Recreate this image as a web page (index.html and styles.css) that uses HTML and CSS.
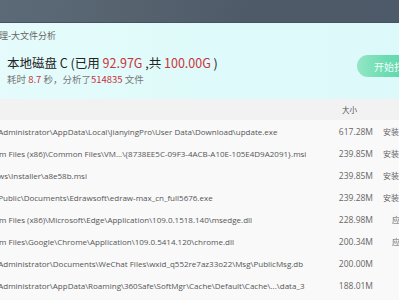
FILE: index.html
```html
<!DOCTYPE html>
<html lang="zh-CN">
<head>
<meta charset="utf-8">
<title>大文件分析</title>
<link rel="stylesheet" href="styles.css">
</head>
<body>
<div class="window">
  <div class="titlebar"></div>
  <div class="panel">
    <div class="crumb">磁盘清理-大文件分析</div>
    <div class="summary">
      <div class="drive-icon"></div>
      <div class="info">
        <div class="disk">本地磁盘 C (已用 <span class="red">92.97G</span> ,共 <span class="red">100.00G</span> )</div>
        <div class="stats">耗时 <span class="red">8.7</span> 秒，分析了<span class="red">514835</span> 文件</div>
      </div>
      <button class="scan">开始扫描</button>
    </div>
  </div>
  <div class="table">
    <div class="thead">
      <span class="c-path"></span>
      <span class="c-size">大小</span>
      <span class="c-type"></span>
    </div>
    <div class="row"><span class="c-path">C:\Users\Administrator\AppData\Local\JianyingPro\User Data\Download\update.exe</span><span class="c-size">617.28M</span><span class="c-type">安装包</span></div>
    <div class="row"><span class="c-path">C:\Program Files (x86)\Common Files\VM...\{8738EE5C-09F3-4ACB-A10E-105E4D9A2091}.msi</span><span class="c-size">239.85M</span><span class="c-type">安装包</span></div>
    <div class="row"><span class="c-path">C:\Windows\Installer\a8e58b.msi</span><span class="c-size">239.85M</span><span class="c-type">安装包</span></div>
    <div class="row"><span class="c-path">C:\Users\Public\Documents\Edrawsoft\edraw-max_cn_full5676.exe</span><span class="c-size">239.28M</span><span class="c-type">安装包</span></div>
    <div class="row"><span class="c-path">C:\Program Files (x86)\Microsoft\Edge\Application\109.0.1518.140\msedge.dll</span><span class="c-size">228.98M</span><span class="c-type indent">应用组件</span></div>
    <div class="row"><span class="c-path">C:\Program Files\Google\Chrome\Application\109.0.5414.120\chrome.dll</span><span class="c-size">200.34M</span><span class="c-type indent">应用组件</span></div>
    <div class="row"><span class="c-path">C:\Users\Administrator\Documents\WeChat Files\wxid_q552re7az33o22\Msg\PublicMsg.db</span><span class="c-size">200.00M</span><span class="c-type"></span></div>
    <div class="row"><span class="c-path">C:\Users\Administrator\AppData\Roaming\360Safe\SoftMgr\Cache\Default\Cache\...\data_3</span><span class="c-size">188.01M</span><span class="c-type"></span></div>
  </div>
</div>
</body>
</html>
```
FILE: styles.css
```css
html, body {
  margin: 0;
  padding: 0;
}
body {
  overflow: hidden;
  background: #f9f9f9;
  font-family: "Noto Sans CJK SC", "Open Sans", sans-serif;
}
.window {
  width: 480px;
  margin-left: -40px;
}
.titlebar {
  height: 22px;
  border-bottom: 1px solid #46525f;
  background: linear-gradient(100deg, #5e6c7b 0%, #56636f 35%, #4e5a68 60%, #4d5a69 100%);
}
.panel {
  height: 76px;
  box-sizing: border-box;
  padding: 6px 9px 0 8px;
  background: linear-gradient(90deg, #e7fcfc 0%, #dffafa 50%, #dcf9f9 100%);
}
.crumb {
  padding-left: 4px;
  font-size: 9px;
  line-height: 13px;
  color: #666;
}
.summary {
  display: flex;
  align-items: flex-start;
  margin-top: 12px;
}
.drive-icon {
  width: 32px;
  height: 32px;
  margin-right: 7px;
}
.info {
  flex: 1;
}
.disk {
  font-size: 12.5px;
  line-height: 18px;
  color: #222;
}
.stats {
  font-size: 9.5px;
  line-height: 14px;
  color: #777;
}
.red {
  color: #c8343b;
}
.scan {
  width: 74px;
  height: 22px;
  margin-top: 1px;
  padding: 0 0 0 17px;
  border: none;
  border-radius: 11px;
  background: linear-gradient(90deg, #93e6c6 0%, #6bdcb2 40%, #54d3a3 100%);
  color: #f4fffa;
  font-family: "Noto Sans CJK SC", sans-serif;
  font-size: 10px;
  text-align: left;
}
.table {
  font-size: 8px;
}
.thead, .row {
  display: flex;
  align-items: center;
  padding-left: 4px;
}
.thead {
  height: 21px;
  background: #f2f2f2;
}
.row {
  height: 22px;
  background: #f9f9f9;
}
.c-path {
  flex: 1;
  min-width: 0;
  overflow: hidden;
  white-space: nowrap;
  font-family: "Open Sans", sans-serif;
  color: #555;
}
.c-size {
  width: 60px;
  text-align: right;
  font-family: "Open Sans", sans-serif;
  font-size: 8.5px;
  color: #666;
}
.thead .c-size {
  box-sizing: border-box;
  padding-right: 16px;
  font-family: "Noto Sans CJK SC", sans-serif;
  font-size: 7.5px;
  color: #555;
}
.c-type {
  width: 57px;
  margin-left: 10px;
  font-family: "Noto Sans CJK SC", sans-serif;
  font-size: 8px;
  color: #666;
  white-space: nowrap;
}
.c-type.indent {
  padding-left: 9px;
  box-sizing: border-box;
}
```
